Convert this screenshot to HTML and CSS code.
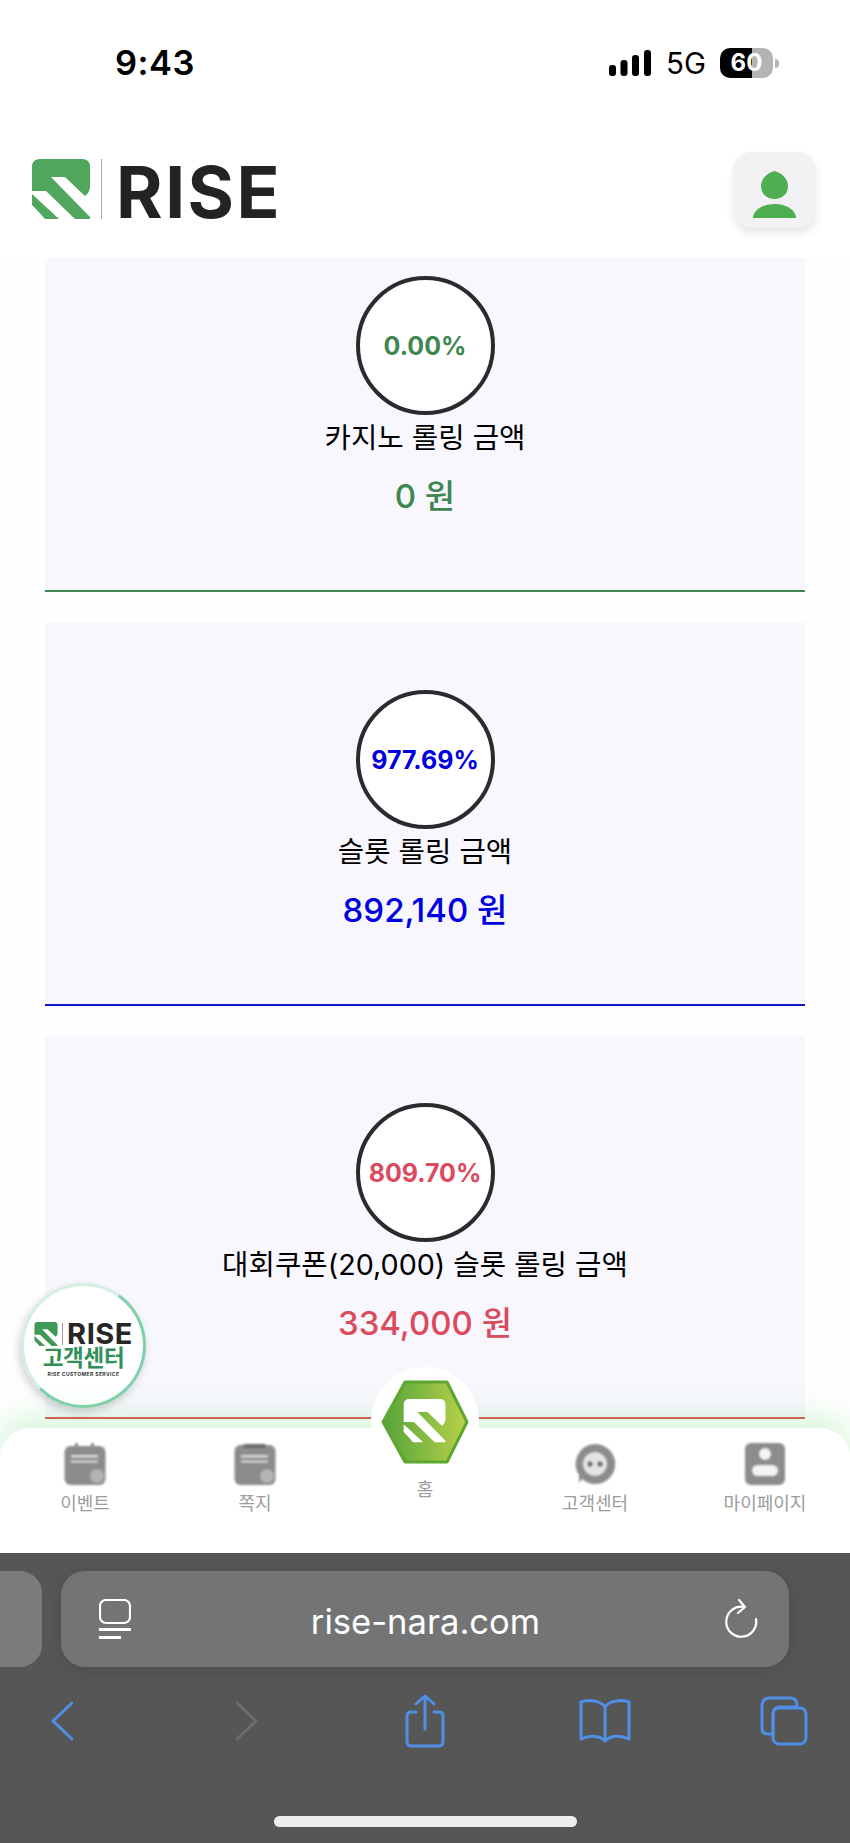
FILE: index.html
```html
<!DOCTYPE html>
<html lang="ko">
<head>
<meta charset="utf-8">
<title>RISE</title>
<link rel="stylesheet" href="styles.css">
</head>
<body>
<div class="phone">
  <div class="statusbar">
    <span class="time">9:43</span>
    <div class="status-right">
      <svg class="signal" viewBox="0 0 42 26" width="42" height="26"><rect x="0" y="15" width="7" height="11" rx="3"/><rect x="11.500" y="10" width="7" height="16" rx="3"/><rect x="23" y="5" width="7" height="21" rx="3"/><rect x="35" y="0" width="7" height="26" rx="3"/></svg>
      <span class="network">5G</span>
      <span class="battery">60</span>
      <span class="battery-nub"></span>
    </div>
  </div>

  <header class="header">
    <div class="logo">
      <svg class="logo-mark" viewBox="0 0 58 60" width="58" height="60"><path fill="#4fa65c" d="M0 8Q0 0 8 0H50Q58 0 58 8V28Q58 33 53 37L33 18H19L58 58V60H43L14 32H2L0 32Z"/><path fill="#4fa65c" d="M0 35L27 60H13Q8 54 0 46Z"/></svg>
      <span class="logo-divider"></span>
      <span class="logo-text">RISE</span>
    </div>
    <button class="user-btn" type="button">
      <svg viewBox="0 0 44 48" width="44" height="48"><path fill="#4fae50" d="M21.500 0C29 2 35 8 35 15C35 23 29 28 21.500 28C14 28 8 23 8 15C8 8 14 2 21.500 0Z"/><path fill="#4fae50" d="M0 47C0 39 10 33 21.500 33C33 33 43 39 43 47Z"/></svg>
    </button>
  </header>

  <main class="main">
    <div class="cards">
      <section class="card card-green">
        <div class="gauge">0.00%</div>
        <div class="label">카지노 롤링 금액</div>
        <div class="amount">0 원</div>
      </section>
      <section class="card card-blue">
        <div class="gauge">977.69%</div>
        <div class="label">슬롯 롤링 금액</div>
        <div class="amount">892,140 원</div>
      </section>
      <section class="card card-red">
        <div class="gauge">809.70%</div>
        <div class="label">대회쿠폰(20,000) 슬롯 롤링 금액</div>
        <div class="amount">334,000 원</div>
      </section>
    </div>

    <div class="cs-badge">
      <div class="cs-inner">
        <div class="cs-logo">
          <svg viewBox="0 0 58 60" width="24" height="24"><path fill="#3f9a58" d="M0 8Q0 0 8 0H50Q58 0 58 8V28Q58 33 53 37L33 18H19L58 58V60H43L14 32H2L0 32Z"/><path fill="#3f9a58" d="M0 35L27 60H13Q8 54 0 46Z"/></svg>
          <span class="cs-divider"></span>
          <span class="cs-rise">RISE</span>
        </div>
        <div class="cs-title">고객센터</div>
        <div class="cs-sub">RISE CUSTOMER SERVICE</div>
      </div>
    </div>

    <nav class="nav">
      <a class="nav-item">
        <svg class="nav-icon" viewBox="0 0 42 42" width="42" height="42"><rect x="11" y="0" width="3" height="8" fill="#8a8a8a"/><rect x="27" y="0" width="3" height="8" fill="#8a8a8a"/><rect x="0.500" y="3" width="41" height="39" rx="6" fill="#8c8c8c"/><rect x="7" y="12" width="27" height="2.500" fill="#dedede"/><rect x="7" y="17.500" width="27" height="2" fill="#dedede"/><circle cx="33" cy="33" r="7" fill="#b4b4b4"/></svg>
        <span>이벤트</span>
      </a>
      <a class="nav-item">
        <svg class="nav-icon" viewBox="0 0 42 42" width="42" height="42"><rect x="0.500" y="2" width="41" height="40" rx="6" fill="#8c8c8c"/><rect x="9" y="1" width="23" height="4" rx="2" fill="#6b6b6b"/><rect x="7" y="12" width="27" height="2.500" fill="#dedede"/><rect x="7" y="17.500" width="27" height="2" fill="#dedede"/><circle cx="33" cy="33" r="7" fill="#b4b4b4"/></svg>
        <span>쪽지</span>
      </a>
      <a class="nav-item nav-home">
        <span class="home-circle">
          <svg viewBox="0 0 88 84" width="88" height="84">
            <defs><linearGradient id="hex" x1="0" y1="0" x2="1" y2="0"><stop offset="0" stop-color="#55a33a"/><stop offset="1" stop-color="#b9d24a"/></linearGradient></defs>
            <path fill="url(#hex)" stroke="#5da62f" stroke-width="3" stroke-linejoin="round" d="M2 42L24 2H66L86 42L66 82H24Z"/>
            <g transform="translate(22.700 19) scale(.72)"><path fill="#fff" d="M0 8Q0 0 8 0H50Q58 0 58 8V28Q58 33 53 37L33 18H19L58 58V60H43L14 32H2L0 32Z"/><path fill="#fff" d="M0 35L27 60H13Q8 54 0 46Z"/></g>
          </svg>
        </span>
        <span>홈</span>
      </a>
      <a class="nav-item">
        <svg class="nav-icon" viewBox="0 0 42 42" width="42" height="42"><path fill="#8c8c8c" d="M21 1A20 20 0 1 1 8 36L5 40L5 32A20 20 0 0 1 21 1Z"/><circle cx="21" cy="21" r="12" fill="#e4e4e4"/><circle cx="16" cy="21" r="2.500" fill="#666"/><circle cx="26" cy="21" r="2.500" fill="#666"/></svg>
        <span>고객센터</span>
      </a>
      <a class="nav-item">
        <svg class="nav-icon" viewBox="0 0 42 42" width="42" height="42"><rect x="1" y="0" width="40" height="42" rx="6" fill="#8c8c8c"/><circle cx="21" cy="11" r="6" fill="#f4f4f4"/><rect x="8" y="22" width="26" height="11" rx="5.500" fill="#f4f4f4"/></svg>
        <span>마이페이지</span>
      </a>
    </nav>
  </main>

  <footer class="safari">
    <div class="url-row">
      <div class="tab-stub"></div>
      <div class="url-bar">
        <svg class="reader" viewBox="0 0 32 40" width="32" height="40"><rect x="1" y="1" width="30" height="23" rx="6" fill="none" stroke="#fff" stroke-width="2.200"/><rect x="0" y="29" width="32" height="3" fill="#fff"/><rect x="0" y="37" width="22" height="3" fill="#fff"/></svg>
        <span class="url">rise-nara.com</span>
        <svg class="reload" viewBox="0 0 34 40" width="34" height="40"><path fill="none" stroke="#fff" stroke-width="2.200" stroke-linecap="round" d="M20 8A15 15 0 1 0 32 20"/><path fill="none" stroke="#fff" stroke-width="2.200" stroke-linecap="round" stroke-linejoin="round" d="M15 1L21 8L14 14"/></svg>
      </div>
    </div>
    <div class="toolbar">
      <svg viewBox="0 0 22 40" width="22" height="40"><path fill="none" stroke="#4f8fe8" stroke-width="3" stroke-linecap="round" stroke-linejoin="round" d="M21 2L2 20L21 38"/></svg>
      <svg viewBox="0 0 22 40" width="22" height="40"><path fill="none" stroke="#6c6d6e" stroke-width="3" stroke-linecap="round" stroke-linejoin="round" d="M1 2L20 20L1 38"/></svg>
      <svg viewBox="0 0 40 54" width="40" height="54"><path fill="none" stroke="#4f8fe8" stroke-width="3" stroke-linecap="round" stroke-linejoin="round" d="M11 18H6Q2 18 2 22V47Q2 52 6 52H34Q38 52 38 47V22Q38 18 34 18H29M20 35V2M11 10L20 2L29 10"/></svg>
      <svg viewBox="0 0 52 44" width="52" height="44"><path fill="none" stroke="#4f8fe8" stroke-width="3" stroke-linecap="round" stroke-linejoin="round" d="M26 8C22 2 10 0 2 3V40C10 36 20 36 26 42C32 36 42 36 50 40V3C42 0 30 2 26 8ZM26 8V42"/></svg>
      <svg viewBox="0 0 48 50" width="48" height="50"><path fill="none" stroke="#4f8fe8" stroke-width="3" stroke-linejoin="round" d="M10 2H30Q37 2 37 9V11H20Q13 11 13 18V38H8Q2 38 2 32V10Q2 2 10 2Z"/><rect x="13" y="12" width="33" height="36" rx="6" fill="none" stroke="#4f8fe8" stroke-width="3"/></svg>
    </div>
    <div class="home-indicator"></div>
  </footer>
</div>
</body>
</html>
```

FILE: styles.css
```css
* { box-sizing: border-box; }

html, body {
  margin: 0;
  padding: 0;
  background: #fff;
}

body {
  font-family: "Inter", "Noto Sans CJK KR", sans-serif;
  color: #000;
}

.phone {
  width: 850px;
  height: 1843px;
  display: flex;
  flex-direction: column;
  overflow: hidden;
}

/* status bar */
.statusbar {
  height: 112px;
  padding: 40px 71px 0 115px;
  display: flex;
  justify-content: space-between;
  align-items: flex-start;
}

.time {
  font-size: 34.500px;
  font-weight: 600;
  line-height: 46px;
  letter-spacing: 0.5px;
}

.status-right {
  display: flex;
  align-items: center;
  height: 46px;
}

.signal { fill: #000; margin-right: 15px; }

.network {
  font-size: 29.500px;
  font-weight: 400;
  line-height: 46px;
  margin-right: 14px;
}

.battery {
  width: 53px;
  height: 30px;
  border-radius: 10px;
  background: linear-gradient(90deg, #000 0 32px, #b4b4b4 32px);
  color: #fff;
  font-size: 24px;
  font-weight: 700;
  line-height: 30px;
  text-align: center;
}

.battery-nub {
  width: 4px;
  height: 9px;
  margin-left: 2px;
  border-radius: 0 4px 4px 0;
  background: #b4b4b4;
}

/* header */
.header {
  height: 146px;
  padding: 40px 34px 0 32px;
  display: flex;
  justify-content: space-between;
  align-items: flex-start;
  background: #fff;
}

.logo {
  display: flex;
  align-items: center;
  height: 62px;
  margin-top: 6px;
}

.logo-divider {
  width: 1px;
  height: 60px;
  margin: 0 14px 0 11px;
  background: #a8a8a8;
}

.logo-text {
  padding-top: 5px;
  font-family: "Inter", sans-serif;
  font-size: 71px;
  font-weight: 700;
  line-height: 62px;
  letter-spacing: 2.500px;
  color: #232323;
}

.user-btn {
  width: 82px;
  height: 76px;
  padding: 12px 0 0;
  border: 0;
  border-radius: 18px;
  background: #f2f2f5;
  box-shadow: 0 5px 9px rgba(0, 0, 0, 0.1);
}

/* main scroll area */
.main {
  position: relative;
  flex: 1;
  min-height: 0;
  overflow: hidden;
  background: #fefefe;
}

.cards {
  margin-top: -50px;
  padding: 0 45px;
  display: flex;
  flex-direction: column;
  gap: 30px;
}

.card {
  flex: none;
  height: 384px;
  padding-top: 68px;
  background: #f7f7fd;
  border-bottom: 2px solid;
  display: flex;
  flex-direction: column;
  align-items: center;
}

.card-green { color: #3f8650; border-color: #3f8650; }
.card-blue { color: #0000e0; border-color: #1414c8; }
.card-red { margin-top: -1px; color: #dc4a5e; border-color: #d9554f; }

.gauge {
  width: 139px;
  height: 139px;
  border: 4px solid #2b2b2f;
  border-radius: 50%;
  background: #fff;
  display: flex;
  align-items: center;
  justify-content: center;
  font-size: 25px;
  font-weight: 700;
}

.label {
  margin-top: 3px;
  font-size: 28.700px;
  line-height: 40px;
  color: #000;
}

.amount {
  margin-top: 17px;
  font-size: 33px;
  font-weight: 500;
  line-height: 42px;
}

/* customer service badge */
.cs-badge {
  position: absolute;
  left: 21px;
  top: 1025px;
  width: 125px;
  height: 125px;
  padding: 3px;
  border-radius: 50%;
  background: conic-gradient(from 35deg, #7fd1a9 0 190deg, #d3efe2 190deg 360deg);
  box-shadow: -2px 4px 9px rgba(0, 0, 0, 0.18);
}

.cs-inner {
  width: 100%;
  height: 100%;
  padding-top: 36px;
  border-radius: 50%;
  background: #fff;
  display: flex;
  flex-direction: column;
  align-items: center;
}

.cs-logo {
  display: flex;
  align-items: center;
  height: 24px;
}

.cs-divider {
  width: 1px;
  height: 22px;
  margin: 0 4px;
  background: #999;
}

.cs-rise {
  font-size: 29px;
  font-weight: 700;
  line-height: 24px;
  letter-spacing: 0.5px;
  color: #262626;
}

.cs-title {
  font-size: 22.500px;
  font-weight: 700;
  line-height: 24px;
  letter-spacing: -0.3px;
  color: #2f9058;
}

.cs-sub {
  font-size: 5px;
  font-weight: 700;
  line-height: 8px;
  letter-spacing: 0.4px;
  color: #333;
}

/* bottom navigation */
.nav {
  position: absolute;
  left: 0;
  right: 0;
  bottom: 0;
  height: 125px;
  padding-top: 15px;
  display: grid;
  grid-template-columns: repeat(5, 170px);
  border-radius: 30px 30px 0 0;
  background: #fff;
  box-shadow: 0 -12px 30px rgba(110, 225, 120, 0.26);
}

.nav-item {
  position: relative;
  display: flex;
  flex-direction: column;
  align-items: center;
  font-size: 18px;
  font-weight: 400;
  line-height: 26px;
  color: #9c9c9c;
}

.nav-icon {
  margin-bottom: 6px;
  filter: blur(1px);
}

.nav-home {
  padding-top: 34px;
}

.home-circle {
  position: absolute;
  top: -76px;
  left: 31px;
  width: 108px;
  height: 108px;
  padding: 13px 0 0 10px;
  border-radius: 50%;
  background: #fff;
}

/* safari chrome */
.safari {
  height: 290px;
  flex: none;
  background: #565657;
}

.url-row {
  display: flex;
  height: 114px;
  padding-top: 18px;
}

.tab-stub {
  width: 42px;
  border-radius: 0 22px 22px 0;
  background: #7b7c7a;
}

.url-bar {
  width: 728px;
  margin-left: 19px;
  padding: 0 31px 0 38px;
  display: flex;
  align-items: center;
  justify-content: space-between;
  border-radius: 24px;
  background: #737476;
  box-shadow: 0 2px 14px rgba(0, 0, 0, 0.12);
}

.url {
  padding: 4px 4px 0 0;
  font-size: 34.600px;
  color: #fff;
  line-height: 40px;
}

.toolbar {
  display: grid;
  grid-template-columns: 124px 246px 110px 250px 108px;
  justify-items: center;
  align-items: center;
  height: 54px;
  margin-top: 27px;
}

.home-indicator {
  width: 303px;
  height: 11px;
  margin: 68px 0 0 274px;
  border-radius: 6px;
  background: #eeeeef;
}
```
